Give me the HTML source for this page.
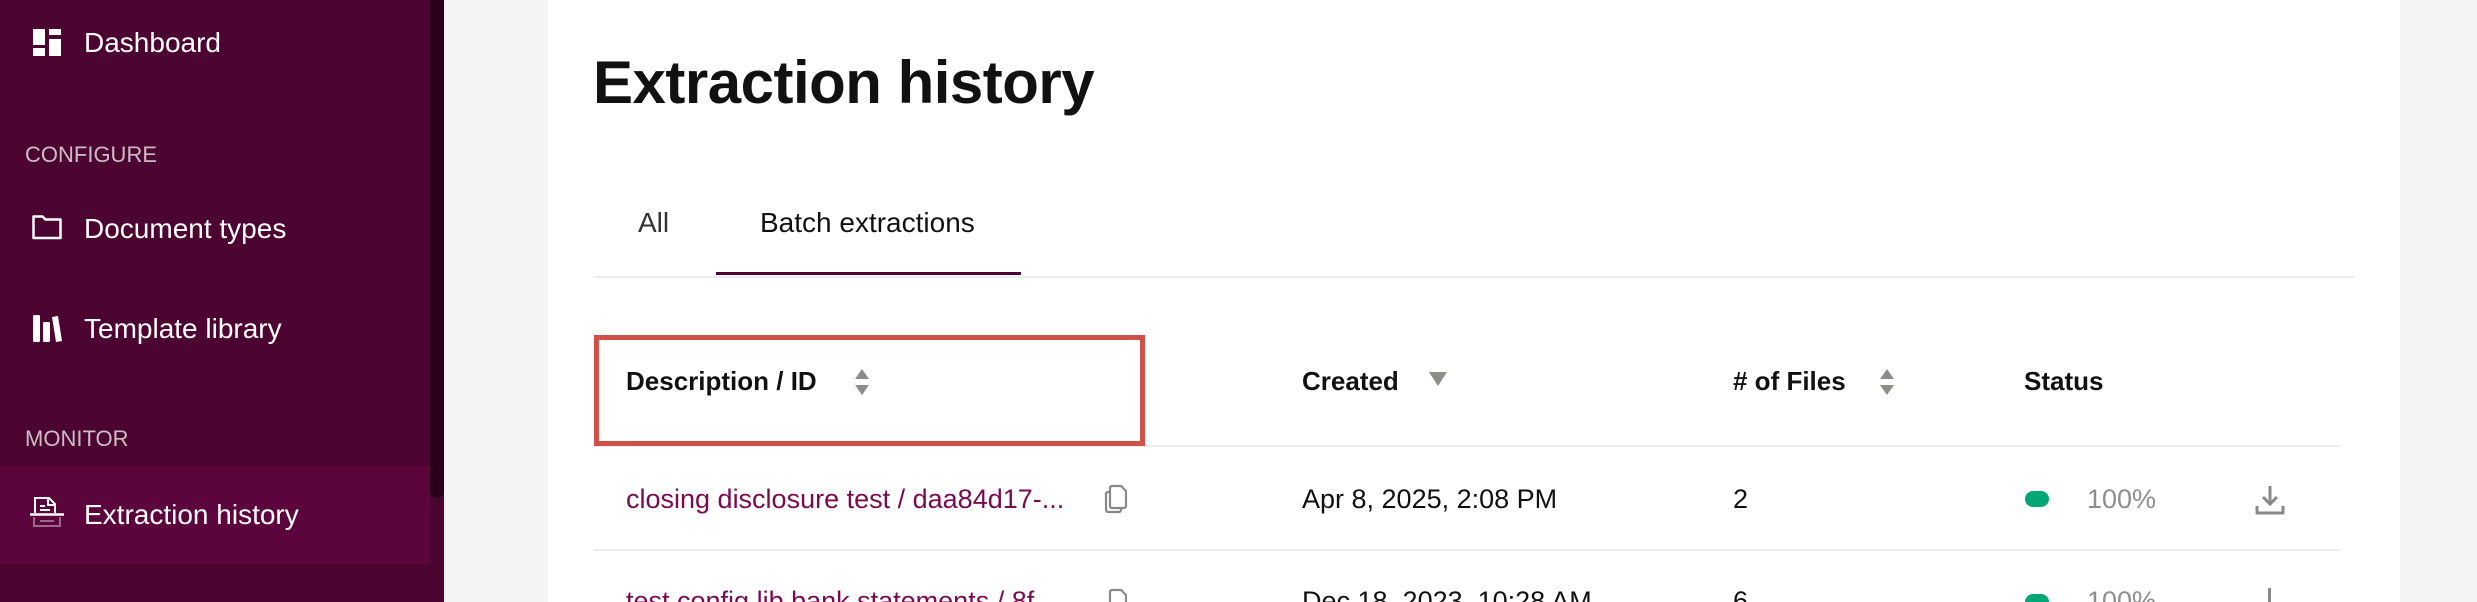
<!DOCTYPE html>
<html style="width:2477px;height:602px;overflow:hidden"><head><meta charset="utf-8"><style>
*{margin:0;padding:0;box-sizing:border-box}
body{width:2477px;height:602px;overflow:hidden;background:#f4f4f2;font-family:"Liberation Sans",sans-serif;position:relative}
.a{position:absolute;white-space:nowrap}
.side{position:absolute;left:0;top:0;width:444px;height:602px;background:#4c0430}
.nav{color:#fff;font-size:28px;line-height:30px}
.sec{color:#cdbcc6;font-size:22px;line-height:24px}
.th{font-weight:bold;font-size:26px;color:#111;line-height:28px}
.td{font-size:27px;color:#111;line-height:28px}
</style></head><body>
<div class="side"></div>
<div class="a" style="left:0;top:466px;width:430px;height:98px;background:#5c043c"></div>
<div class="a" style="left:430px;top:0;width:14px;height:498px;background:#2a0018;border-radius:0 0 7px 7px"></div>

<svg class="a" style="left:32px;top:28px" width="30" height="30" viewBox="0 0 30 30"><rect x="1" y="1" width="12" height="16" fill="#fff"/><rect x="17" y="1" width="12" height="6" fill="#fff"/><rect x="1" y="20" width="12" height="8" fill="#fff"/><rect x="17" y="11" width="12" height="17" fill="#fff"/></svg>
<div class="a nav" style="left:84px;top:28px">Dashboard</div>
<div class="a sec" style="left:25px;top:143px">CONFIGURE</div>
<svg class="a" style="left:32px;top:214px" width="30" height="26" viewBox="0 0 30 26"><path d="M1.5 2.5h9l3 3h15v18.5h-27z" fill="none" stroke="#fff" stroke-width="2.5" stroke-linejoin="round"/></svg>
<div class="a nav" style="left:84px;top:214px">Document types</div>
<svg class="a" style="left:32px;top:313px" width="30" height="30" viewBox="0 0 30 30"><rect x="1" y="2" width="7" height="27" rx="1.5" fill="#fff"/><rect x="11" y="9" width="7" height="20" rx="1.5" fill="#fff"/><path d="M20 4l6-1 4 25-6 1z" fill="#fff"/></svg>
<div class="a nav" style="left:84px;top:314px">Template library</div>
<div class="a sec" style="left:25px;top:427px">MONITOR</div>
<svg class="a" style="left:30px;top:496px" width="34" height="32" viewBox="0 0 34 32"><path d="M5 17V2h14l6 6v9" fill="none" stroke="#fff" stroke-width="2"/><path d="M18 2v7h7" fill="none" stroke="#fff" stroke-width="2"/><path d="M10 10h5M10 14h10" stroke="#fff" stroke-width="2"/><path d="M0 18.5h34" stroke="#fff" stroke-width="2.5"/><path d="M4 21v9h26v-9M10 25h14" fill="none" stroke="#fff" stroke-opacity=".4" stroke-width="2"/></svg>
<div class="a nav" style="left:84px;top:500px">Extraction history</div>

<div class="a" style="left:548px;top:0;width:1852px;height:602px;background:#fff"></div>
<div class="a" style="left:593px;top:48px;font-size:60px;font-weight:bold;color:#111;line-height:70px;letter-spacing:-0.5px">Extraction history</div>
<div class="a td" style="left:638px;top:209px;color:#333;font-size:28px">All</div>
<div class="a td" style="left:760px;top:209px;font-size:28px">Batch extractions</div>
<div class="a" style="left:594px;top:276px;width:1761px;height:2px;background:#ececec"></div>
<div class="a" style="left:716px;top:272px;width:305px;height:3px;background:#4c0430"></div>

<div class="a" style="left:594px;top:445px;width:1746px;height:2px;background:#ececec"></div>
<div class="a" style="left:594px;top:549px;width:1746px;height:2px;background:#ececec"></div>
<div class="a" style="left:594px;top:335px;width:551px;height:111px;border:5px solid #d0504a"></div>

<div class="a th" style="left:626px;top:367px">Description / ID</div>
<svg class="a" style="left:853px;top:368px" width="18" height="28" viewBox="0 0 18 28"><path d="M9 1l7 10H2zM9 27l7-10H2z" fill="#8a8d88"/></svg>
<div class="a th" style="left:1302px;top:367px">Created</div>
<svg class="a" style="left:1428px;top:371px" width="20" height="16" viewBox="0 0 20 16"><path d="M1 1h18L10 15z" fill="#8a8d88"/></svg>
<div class="a th" style="left:1733px;top:367px"># of Files</div>
<svg class="a" style="left:1878px;top:368px" width="18" height="28" viewBox="0 0 18 28"><path d="M9 1l7 10H2zM9 27l7-10H2z" fill="#8a8d88"/></svg>
<div class="a th" style="left:2024px;top:367px">Status</div>

<div class="a td" style="left:626px;top:485px;color:#7a0a4e">closing disclosure test / daa84d17-...</div>
<svg class="a" style="left:1104px;top:484px" width="24" height="30" viewBox="0 0 24 30"><path d="M8 2h9l5 5v15a2 2 0 0 1-2 2H8a2 2 0 0 1-2-2V4a2 2 0 0 1 2-2z" fill="none" stroke="#888" stroke-width="2.2"/><path d="M6 8H4a2 2 0 0 0-2 2v16a2 2 0 0 0 2 2h11a2 2 0 0 0 2-2v-2" fill="none" stroke="#888" stroke-width="2.2"/></svg>
<div class="a td" style="left:1302px;top:485px">Apr 8, 2025, 2:08 PM</div>
<div class="a td" style="left:1733px;top:485px">2</div>
<div class="a" style="left:2025px;top:491px;width:24px;height:16px;border-radius:8px;background:#00a676"></div>
<div class="a td" style="left:2087px;top:485px;color:#8e8e8e">100%</div>
<svg class="a" style="left:2254px;top:484px" width="32" height="32" viewBox="0 0 32 32"><path d="M16 2v18M9 13l7 7 7-7" fill="none" stroke="#888" stroke-width="3"/><path d="M3 22v7h26v-7" fill="none" stroke="#888" stroke-width="3" stroke-linejoin="round"/></svg>

<div class="a td" style="left:626px;top:587px;color:#7a0a4e">test config lib bank statements / 8f...</div>
<svg class="a" style="left:1104px;top:588px" width="24" height="30" viewBox="0 0 24 30"><path d="M8 2h9l5 5v15a2 2 0 0 1-2 2H8a2 2 0 0 1-2-2V4a2 2 0 0 1 2-2z" fill="none" stroke="#888" stroke-width="2.2"/></svg>
<div class="a td" style="left:1302px;top:587px">Dec 18, 2023, 10:28 AM</div>
<div class="a td" style="left:1733px;top:587px">6</div>
<div class="a" style="left:2025px;top:594px;width:24px;height:16px;border-radius:8px;background:#00a676"></div>
<div class="a td" style="left:2087px;top:587px;color:#8e8e8e">100%</div>
<div class="a" style="left:2268px;top:588px;width:3px;height:20px;background:#888"></div>
</body></html>
